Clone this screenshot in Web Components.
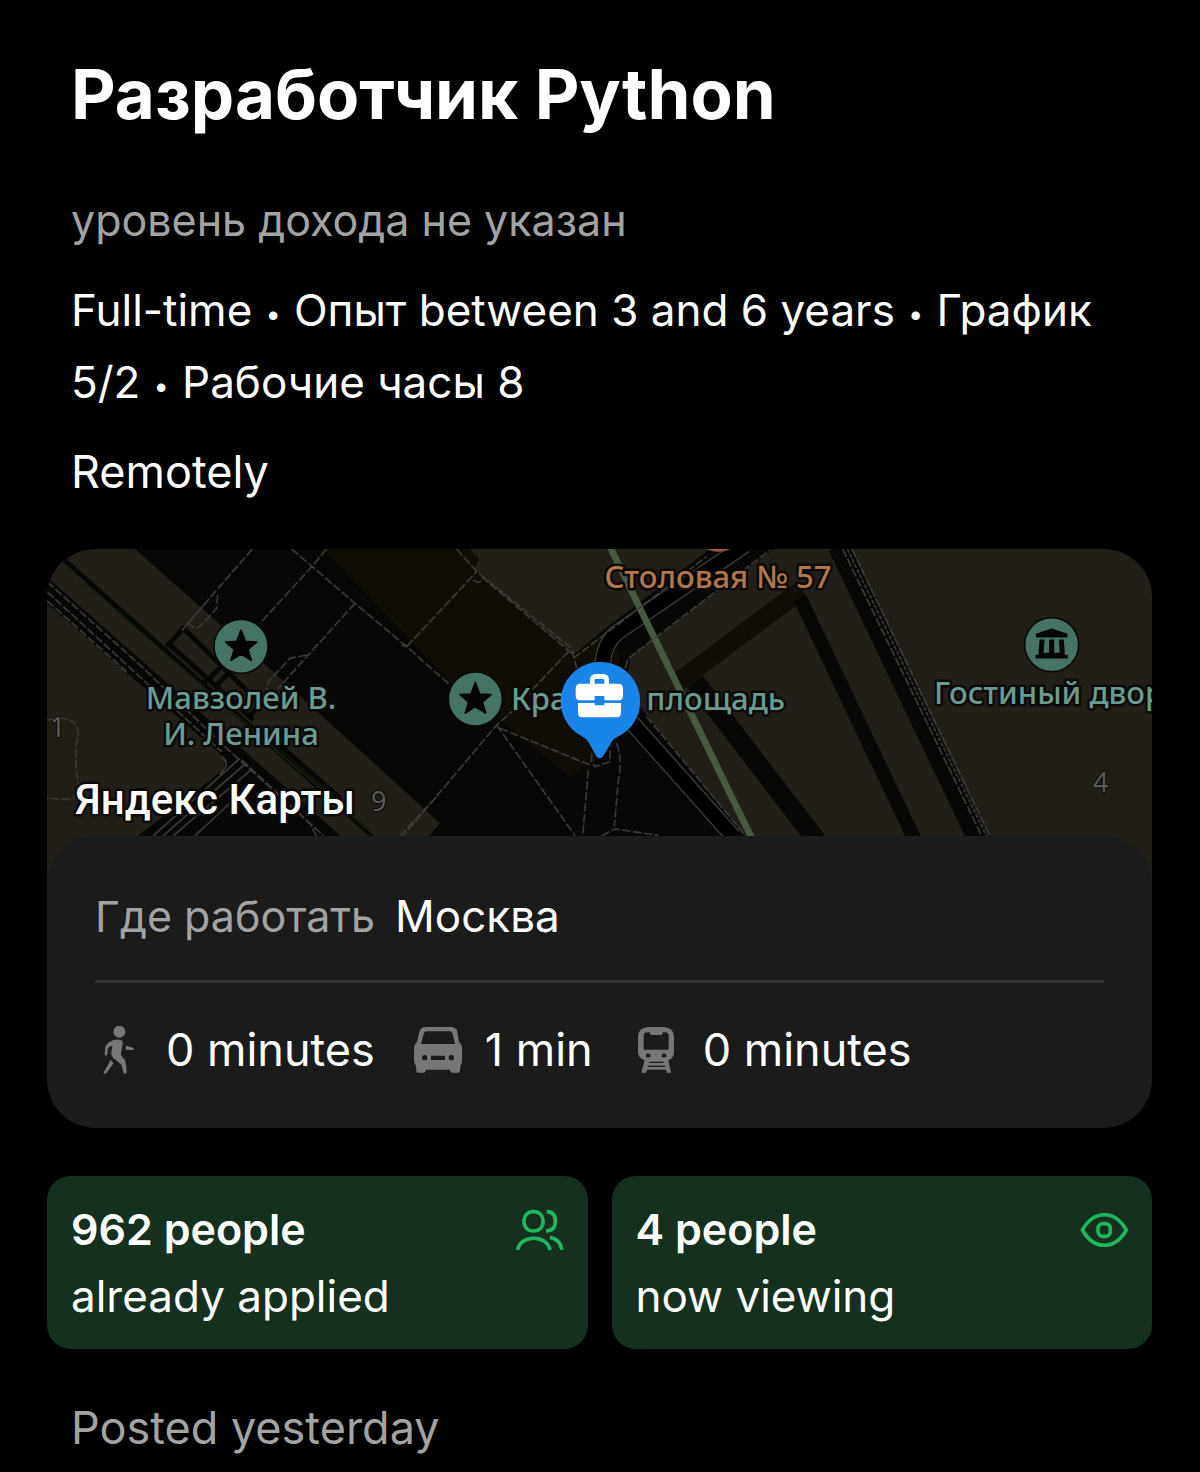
<!DOCTYPE html>
<html lang="ru">
<head>
<meta charset="utf-8">
<meta name="viewport" content="width=device-width, initial-scale=1">
<title>Разработчик Python</title>
<style>
  body {
    margin: 0;
    background: #000;
    color: #fff;
    font: 400 44px/72px Inter, "Noto Sans", sans-serif;
  }
  .dot {
    margin: 0 3px;
    font: 31px/1 "Liberation Sans", sans-serif;
  }
</style>
</head>
<body>
<vacancy-page>
  <vacancy-header slot="header">
    <span slot="title">Разработчик Python</span>
    <span slot="salary">уровень дохода не указан</span>
    <span slot="terms">Full-time <span class="dot">•</span> Опыт between 3 and 6 years <span class="dot">•</span> График 5/2 <span class="dot">•</span> Рабочие часы 8</span>
    <span slot="format">Remotely</span>
  </vacancy-header>
  <location-card slot="location">
    <city-map slot="map"></city-map>
    <span slot="label">Где работать</span>
    <span slot="city">Москва</span>
    <travel-time slot="routes" icon="walk">0 minutes</travel-time>
    <travel-time slot="routes" icon="car">1 min</travel-time>
    <travel-time slot="routes" icon="train">0 minutes</travel-time>
  </location-card>
  <stat-card slot="stats" icon="people"><span slot="count">962 people</span>already applied</stat-card>
  <stat-card slot="stats" icon="eye"><span slot="count">4 people</span>now viewing</stat-card>
  <span slot="posted">Posted yesterday</span>
</vacancy-page>

<script>
const icons = {
  walk: `<svg viewBox="45 48 144 144" fill="currentColor">
    <circle cx="118" cy="65" r="18"/>
    <path d="M101 90Q114 86 125 91Q130 94 128 103L123 130Q122 136 127 141Q137 150 138 161L140 186Q140 191 135 191Q131 191 130 187L124 164L99 143Q92 137 94 127L97 107L87 112Q83 114 83 120L82 132Q81 138 77 137Q74 136 74 131L76 112Q77 104 85 98Z"/>
    <path d="M138 107L159 113Q162 114 162 118Q161 120 157 120L137 119Z"/>
    <path d="M91 149L101 159L95 168L80 188Q77 192 73 191Q70 189 72 185L84 165Z"/>
  </svg>`,
  car: `<svg viewBox="45 48 144 144" fill="currentColor" fill-rule="evenodd">
    <path d="M80 51H153Q172 51 175 65L180 97Q189 103 189 115V150Q189 161 184 168L183 182Q183 188 176 188H160Q153 188 153 179H80Q80 188 73 188H58Q52 188 52 182L51 168Q45 161 45 150V115Q45 103 54 97L61 65Q65 51 80 51ZM83 64Q76 64 74 71L66 102H168L161 71Q159 64 151 64ZM96 137V150H138V137ZM77 135A8 8 0 1 0 77 151A8 8 0 1 0 77 135ZM157 135A8 8 0 1 0 157 151A8 8 0 1 0 157 135Z"/>
  </svg>`,
  train: `<svg viewBox="693 48 144 144" fill="currentColor" fill-rule="evenodd">
    <path d="M741 51H789Q819 53 819 82V126Q819 144 802 151L810 188H797L795 179H738L735 188H721L731 151Q711 144 711 126V82Q711 53 741 51ZM747 67H739Q728 67 728 77V119H803V77Q803 67 792 67H785V70Q785 75 780 75H752Q747 75 747 70ZM735 131V142H748V131ZM783 131V142H796V131ZM745 155L743 159H789L787 155ZM741 167L740 171H793L792 167Z"/>
  </svg>`,
  people: `<svg viewBox="48 48 144 144" fill="none" stroke="currentColor" stroke-width="11">
    <rect x="72" y="65" width="57" height="58" rx="26"/>
    <path d="M140 65C160 65 166 77 166 94C166 112 159 123 138 123M53 180C60 133 142 133 150 180M150 142C169 145 182 158 186 180"/>
  </svg>`,
  eye: `<svg viewBox="60 48 144 144" fill="none" stroke="currentColor" stroke-width="11" stroke-linejoin="round">
    <path d="M67 120C102 59 164 59 199 120C164 181 102 181 67 120Z"/>
    <rect x="114" y="101" width="37" height="38" rx="15"/>
  </svg>`
}

class VacancyPage extends HTMLElement {
  constructor() {
    super()
    this.attachShadow({ mode: 'open' })
  }

  connectedCallback() {
    this.shadowRoot.innerHTML = `
      <style>
        :host { display: block; padding: 52px 48px 8px 47px; }
        main { display: flex; flex-direction: column; }
        .location { margin-top: 41px; }
        .stats {
          display: grid;
          grid-template-columns: 1fr 1fr;
          gap: 24px;
          margin-top: 48px;
        }
        .posted { margin: 43px 24px 0; font-size: 45px; color: #a3a3a3; }
      </style>
      <main>
        <slot name="header"></slot>
        <div class="location"><slot name="location"></slot></div>
        <div class="stats"><slot name="stats"></slot></div>
        <div class="posted"><slot name="posted"></slot></div>
      </main>
    `
  }
}

class VacancyHeader extends HTMLElement {
  constructor() {
    super()
    this.attachShadow({ mode: 'open' })
  }

  connectedCallback() {
    this.shadowRoot.innerHTML = `
      <style>
        :host { display: block; padding: 0 24px; }
        h1 { margin: 0 0 48px; font-size: 69px; line-height: 84px; font-weight: 700; }
        p { margin: 18px 0 0; }
        .salary { font-size: 43px; color: #a3a3a3; }
        .format { font-size: 45px; }
      </style>
      <h1><slot name="title"></slot></h1>
      <p class="salary"><slot name="salary"></slot></p>
      <p><slot name="terms"></slot></p>
      <p class="format"><slot name="format"></slot></p>
    `
  }
}

class LocationCard extends HTMLElement {
  constructor() {
    super()
    this.attachShadow({ mode: 'open' })
  }

  connectedCallback() {
    this.shadowRoot.innerHTML = `
      <style>
        :host { display: block; border-radius: 48px; overflow: hidden; }
        .sheet {
          position: relative;
          margin-top: -48px;
          padding: 44px 48px 42px;
          border-radius: 48px;
          background: #1b1b1b;
        }
        .place { display: flex; gap: 20px; }
        .label { font-size: 43px; color: #a3a3a3; }
        hr { height: 3px; margin: 28px 0 31px; border: 0; background: #333; }
        .routes { display: flex; flex-wrap: wrap; gap: 0 39px; }
      </style>
      <slot name="map"></slot>
      <div class="sheet">
        <div class="place">
          <span class="label"><slot name="label"></slot></span>
          <slot name="city"></slot>
        </div>
        <hr>
        <div class="routes"><slot name="routes"></slot></div>
      </div>
    `
  }
}

class TravelTime extends HTMLElement {
  constructor() {
    super()
    this.attachShadow({ mode: 'open' })
  }

  connectedCallback() {
    this.shadowRoot.innerHTML = `
      <style>
        :host {
          display: flex;
          align-items: center;
          gap: 23px;
          font-size: 45px;
          white-space: nowrap;
        }
        svg { display: block; width: 48px; height: 48px; color: #777; }
      </style>
      ${icons[this.getAttribute('icon')]}
      <span><slot></slot></span>
    `
  }
}

class StatCard extends HTMLElement {
  constructor() {
    super()
    this.attachShadow({ mode: 'open' })
  }

  connectedCallback() {
    this.shadowRoot.innerHTML = `
      <style>
        :host {
          display: block;
          padding: 20px 24px 19px;
          border-radius: 24px;
          background: #16301f;
          line-height: 67px;
        }
        .top { display: flex; align-items: center; justify-content: space-between; }
        .count { font-size: 43px; font-weight: 600; }
        svg { display: block; width: 48px; height: 48px; color: #1fb85e; }
      </style>
      <div class="top">
        <span class="count"><slot name="count"></slot></span>
        ${icons[this.getAttribute('icon')]}
      </div>
      <div><slot></slot></div>
    `
  }
}

class CityMap extends HTMLElement {
  constructor() {
    super()
    this.attachShadow({ mode: 'open' })
  }

  connectedCallback() {
    this.shadowRoot.innerHTML = `
      <style>
        :host { display: block; height: 335px; background: #070705; }
        svg { display: block; width: 100%; height: 100%; }
        text {
          font: 500 31px "Noto Sans", sans-serif;
          fill: #6b9b90;
          stroke: #0b0a08;
          stroke-width: 5px;
          stroke-linejoin: round;
          paint-order: stroke;
        }
        .middle { text-anchor: middle; }
        .food { fill: #b1774b; }
        .house { font-size: 27px; font-weight: 400; fill: #5c5a57; stroke-width: 2px; }
        .brand { font: 500 42px Roboto, sans-serif; fill: #fff; }
        .block { fill: #221e18; }
        .yard { fill: #100d06; }
        .lane { fill: none; stroke: #070705; }
        .path { fill: none; stroke: #3a3a39; stroke-width: 5; stroke-dasharray: 26 7; }
        .kerb { fill: none; stroke: #3a3a39; stroke-width: 5; }
      </style>
      <svg viewBox="0 0 1105 335" preserveAspectRatio="xMidYMin slice">
        <g transform="translate(-7 -9) scale(.333333)">
          <path class="block" d="M21 27H285L700 395L1080 740L1200 850L1165 890H905L21 112Z"/>
          <path class="block" d="M21 190L555 655L550 690L290 890V1040H0V190Z"/>
          <path class="block" d="M1260 27H2010L1960 65L1690 270L1600 345L1300 85Z"/>
          <path class="block" d="M2200 27H3360V1040H2230L2115 890L1800 500L1765 400L1770 350Z"/>
          <path class="yard" d="M850 27H1290L1317 55L1302 90L1600 350L1700 270L1740 350L1700 640L1590 710L1405 560L1230 425Z"/>
          <path class="lane" stroke-width="15" d="M60 48L1000 890M380 320L430 265L660 490L625 535M485 435L550 375M525 440L570 395M385 310L640 540M690 590L900 775"/>
          <path d="M70 78L1005 887" fill="none" stroke="#17230f" stroke-width="5"/>
          <path d="M1915 425L2285 150" fill="none" stroke="#100d06" stroke-width="56"/>
          <path class="lane" stroke-width="58" d="M1965 425L2340 915"/>
          <path class="lane" stroke-width="42" d="M2280 175L2634 920"/>
          <path class="lane" stroke-width="62" d="M2395 20L2824 920"/>
          <path fill="none" stroke="#3b3b3a" stroke-width="50" d="M2115 15L1735 275Q1690 310 1688 380Q1700 470 1795 570L2080 890"/>
          <path fill="none" stroke="#000" stroke-width="42" d="M2115 15L1735 275Q1690 310 1688 380Q1700 470 1795 570L2080 890"/>
          <path fill="none" stroke="#455a40" stroke-width="20" d="M1710 20L2138 900"/>
          <path class="kerb" d="M600 655L340 887M615 672L370 887M635 688L400 887M580 780L465 887M545 650Q570 670 550 690L540 705"/>
          <path class="path" d="M21 125L300 375L560 625L850 887M21 155L545 635M21 182L260 395M605 660L810 850L830 890"/>
          <path class="path" d="M637 27L530 150L425 272M533 165L530 205L480 260Q465 270 445 250L495 190M860 27L815 80L660 250M755 27L945 190L1100 320L1230 435M945 190L800 350L715 445M800 345L750 355L685 425L680 450M1100 320L1310 95M1250 27L1310 95L1595 325L1610 385M1325 110L1600 345"/>
          <path class="path" d="M1085 315L1100 320M1585 335L1410 520L1370 555L1090 887M1370 555L1605 887M1380 565L1650 675M1645 690L1628 887M1730 610Q1748 660 1735 720L1723 860M1685 887L1725 867L1855 886M1600 355L2000 50M1755 385L1765 355L2190 30M1820 530L2115 885M1080 887L1195 765"/>
          <path class="path" d="M1655 640V665L1665 680L1710 665V630M1300 120Q1320 135 1330 115"/>
          <path class="path" d="M2408 27L2825 887M2436 27L2850 887"/>
          <path class="kerb" stroke-dasharray="12 5" d="M2422 27L2840 890"/>
          <path class="path" d="M21 540Q115 520 115 585L108 620V690L118 750Q110 780 80 778L21 775"/>
          <circle cx="2035" cy="-45" r="80" fill="#9c5b3c"/>
          <g fill="#457467" stroke="#0b0a08" stroke-width="5">
            <circle cx="603" cy="319" r="81"/>
            <circle cx="1306" cy="477" r="81"/>
            <circle cx="3035" cy="314" r="81"/>
          </g>
          <g fill="#050504" stroke="#050504" stroke-width="5" stroke-linejoin="round">
            <path id="star" d="M603 270L616 304L650 306L624 328L634 361L603 342L573 361L583 328L557 306L590 304Z"/>
            <use href="#star" x="703" y="158"/>
            <path d="M3035 268L3080 283V290H2990V283ZM2989 347H3081V353H2989Z"/>
            <path d="M3001 301H3011L3008 341H2998ZM3030 301H3040V341H3030ZM3059 301H3069L3072 341H3062ZM2998 341H3072V348H2998Z"/>
          </g>
        </g>
        <text class="middle"><tspan x="194" y="160">Мавзолей В.</tspan><tspan x="194" y="196">И. Ленина</tspan></text>
        <text class="middle" x="601" y="161">Красная площадь</text>
        <text class="middle food" x="671" y="39">Столовая № 57</text>
        <text x="887" y="155">Гостиный двор</text>
        <text class="house" x="3" y="188">1</text>
        <text class="house" x="324" y="262">9</text>
        <text class="house" x="1046" y="243">4</text>
        <text class="brand" x="28" y="265">Яндекс Карты</text>
        <g transform="translate(503 101) scale(.333333)">
          <path fill="#1985e8" d="M149 36A118 118 0 0 1 200 262Q187 268 181 283L160 317Q149 333 138 317L119 283Q113 268 98 260A118 118 0 0 1 149 36Z"/>
          <path fill="#fff" fill-rule="evenodd" d="M120 101V90Q120 72 137 72H160Q177 72 177 90V101H205Q219 101 219 116V137Q219 151 205 151H163V138H134V151H91Q77 151 77 137V116Q77 101 91 101ZM134 101H163V91Q163 87 158 87H139Q134 87 134 91Z"/>
          <path fill="#fff" d="M84 159H134V166H163V159H213V188Q213 202 199 202H98Q84 202 84 188Z"/>
        </g>
      </svg>
    `
  }
}

customElements.define('vacancy-page', VacancyPage)
customElements.define('vacancy-header', VacancyHeader)
customElements.define('location-card', LocationCard)
customElements.define('travel-time', TravelTime)
customElements.define('stat-card', StatCard)
customElements.define('city-map', CityMap)
</script>
</body>
</html>
